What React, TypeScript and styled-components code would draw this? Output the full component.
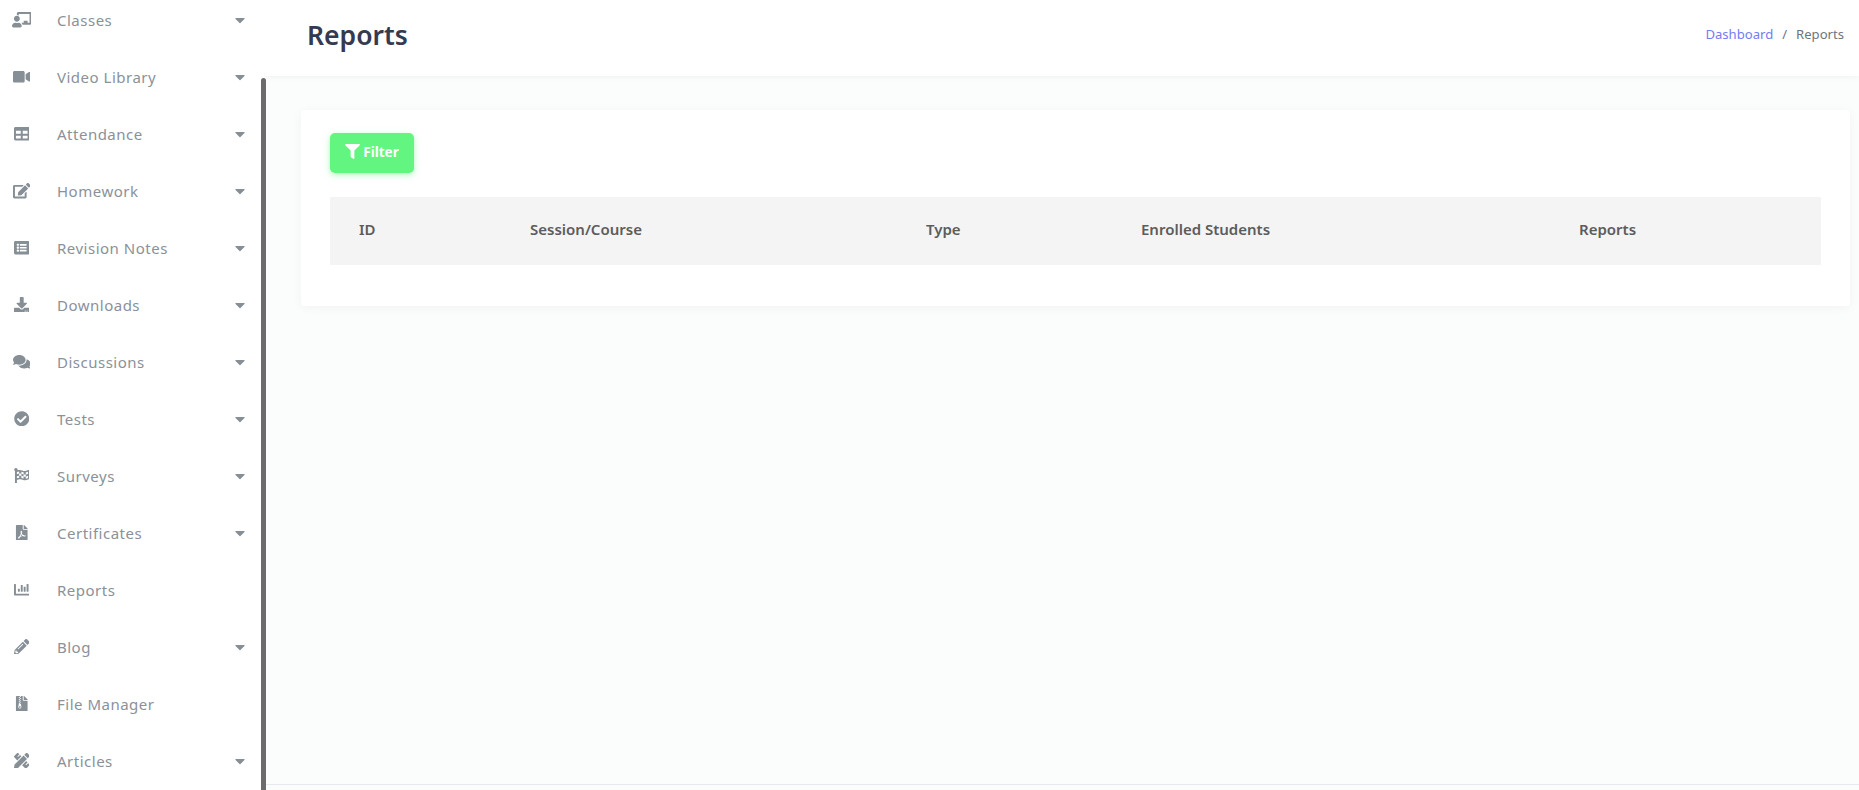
import React from 'react';
import styled, { createGlobalStyle } from 'styled-components';
import type { IconType } from 'react-icons';
import {
  FaChalkboardTeacher, FaVideo, FaTable, FaEdit, FaListAlt, FaDownload, FaComments,
  FaCheckCircle, FaFlagCheckered, FaFilePdf, FaPencilAlt, FaFileArchive,
  FaPencilRuler, FaFilter, FaCaretDown, FaChartBar,
} from 'react-icons/fa';

const Global = createGlobalStyle`
  html, body { margin: 0; padding: 0; height: 100%; overflow: hidden; }
  body { font-family: "Noto Sans", "Lato", sans-serif; background: #fbfcfc; }
  * { box-sizing: border-box; }
`;

const Page = styled.div`
  display: flex;
  width: 1859px;
  height: 790px;
  overflow: hidden;
`;

const Sidebar = styled.nav`
  position: relative;
  flex: 0 0 266px;
  height: 790px;
  background: #fff;
  overflow: hidden;
`;

const NavList = styled.ul`
  list-style: none;
  margin: -8px 0 0;
  padding: 0 18px 0 0;
`;

const NavRow = styled.li`
  display: flex;
  align-items: center;
  height: 57px;
  color: #8a9199;
  font-size: 15px;
  letter-spacing: 0.5px;
  padding-bottom: 2px;
`;

const NavIcon = styled.span`
  flex: 0 0 57px;
  display: flex;
  justify-content: center;
  padding-right: 14px;
  color: #868e96;
`;

const NavLabel = styled.span`
  flex: 1;
`;

const Caret = styled.span`
  display: flex;
  color: #868e96;
  font-size: 16px;
`;

const ScrollThumb = styled.div`
  position: absolute;
  top: 78px;
  right: 0;
  bottom: 0;
  width: 5px;
  background: #6b6b6b;
  border-radius: 3px 3px 0 0;
`;

const Main = styled.div`
  flex: 1;
  display: flex;
  flex-direction: column;
  min-width: 0;
  background: #fbfcfc;
`;

const Header = styled.header`
  display: flex;
  align-items: center;
  justify-content: space-between;
  height: 76px;
  padding: 0 15px 6px 41px;
  background: #fff;
  box-shadow: 0 1px 6px rgba(0, 0, 0, 0.05);
`;

const Title = styled.h1`
  margin: 0;
  font-size: 26.5px;
  font-weight: 600;
  color: #343a50;
`;

const Crumbs = styled.div`
  display: flex;
  gap: 9px;
  padding-bottom: 3px;
  font-size: 13.1px;
  color: #6c757d;
`;

const CrumbLink = styled.a`
  color: #727cf5;
`;

const Content = styled.div`
  flex: 1;
  padding: 34px 9px 0 35px;
`;

const Card = styled.section`
  height: 196px;
  padding: 23px 29px;
  background: #fff;
  border-radius: 4px;
  box-shadow: 0 2px 12px rgba(0, 0, 0, 0.04);
`;

const FilterButton = styled.button`
  display: flex;
  align-items: center;
  justify-content: center;
  gap: 3px;
  width: 84px;
  height: 40px;
  padding: 0 0 3px;
  border: 0;
  border-radius: 5px;
  background: #62f57f;
  color: #fff;
  font: 700 13.5px "Noto Sans", sans-serif;
  box-shadow: 0 2px 6px rgba(98, 245, 127, 0.5);
`;

const TableHead = styled.div`
  display: grid;
  grid-template-columns: 171px 396px 215px 438px 271px;
  align-items: center;
  height: 68px;
  margin-top: 24px;
  background: #f4f4f4;
`;

const HeadCell = styled.div`
  padding: 0 0 4px 29px;
  font-size: 15px;
  font-weight: 600;
  color: #5c5c5c;
`;

const Footer = styled.footer`
  height: 6px;
  border-top: 1px solid #e6eaf0;
`;

const items: [IconType, number, string, boolean][] = [
  [FaChalkboardTeacher, 19.5, 'Classes', true],
  [FaVideo, 17.5, 'Video Library', true],
  [FaTable, 15.5, 'Attendance', true],
  [FaEdit, 17.5, 'Homework', true],
  [FaListAlt, 15.5, 'Revision Notes', true],
  [FaDownload, 15.5, 'Downloads', true],
  [FaComments, 17.5, 'Discussions', true],
  [FaCheckCircle, 15.5, 'Tests', true],
  [FaFlagCheckered, 15.5, 'Surveys', true],
  [FaFilePdf, 15.5, 'Certificates', true],
  [FaChartBar, 15.5, 'Reports', false],
  [FaPencilAlt, 15.5, 'Blog', true],
  [FaFileArchive, 15.5, 'File Manager', false],
  [FaPencilRuler, 15.5, 'Articles', true],
];

const columns = ['ID', 'Session/Course', 'Type', 'Enrolled Students', 'Reports'];

export default function App() {
  return (
    <Page>
      <Global />
      <Sidebar>
        <NavList>
          {items.map(([Icon, size, label, hasCaret]) => (
            <NavRow key={label}>
              <NavIcon><Icon size={size} /></NavIcon>
              <NavLabel>{label}</NavLabel>
              {hasCaret && <Caret><FaCaretDown /></Caret>}
            </NavRow>
          ))}
        </NavList>
        <ScrollThumb />
      </Sidebar>
      <Main>
        <Header>
          <Title>Reports</Title>
          <Crumbs>
            <CrumbLink>Dashboard</CrumbLink>
            <span>/</span>
            <span>Reports</span>
          </Crumbs>
        </Header>
        <Content>
          <Card>
            <FilterButton><FaFilter size={15} /> Filter</FilterButton>
            <TableHead>
              {columns.map((c) => <HeadCell key={c}>{c}</HeadCell>)}
            </TableHead>
          </Card>
        </Content>
        <Footer />
      </Main>
    </Page>
  );
}
